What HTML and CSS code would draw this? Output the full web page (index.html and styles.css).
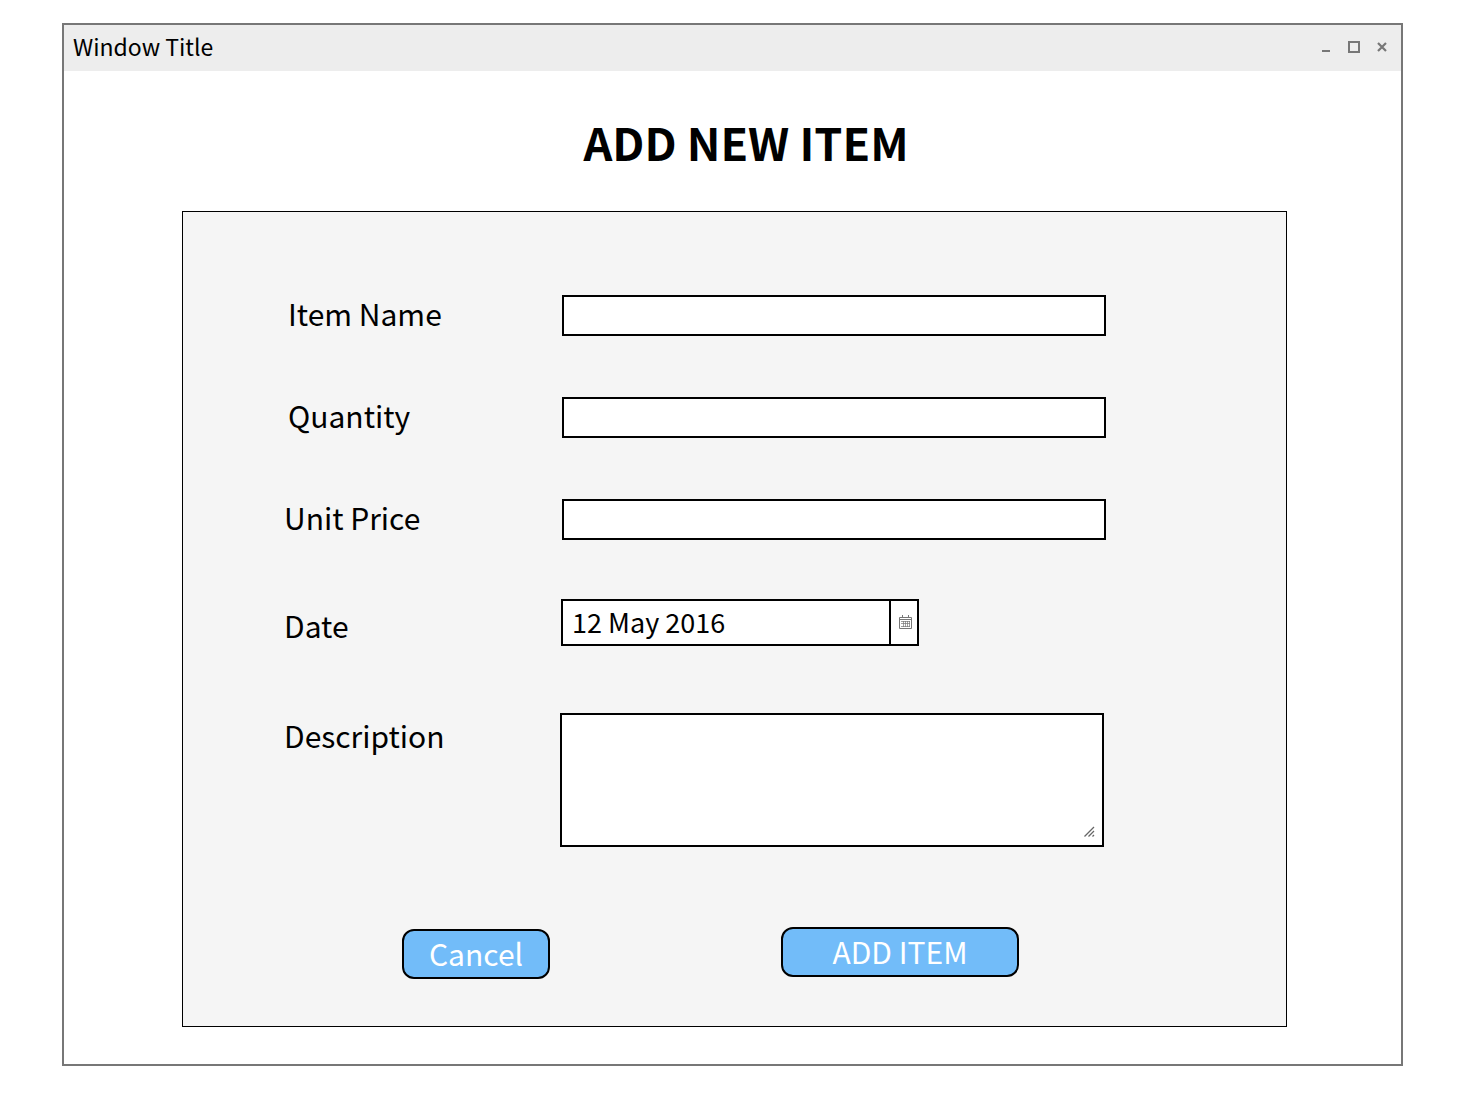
FILE: index.html
```html
<!DOCTYPE html>
<html lang="en">
<head>
<meta charset="utf-8">
<title>Add New Item</title>
<link rel="stylesheet" href="styles.css">
</head>
<body>
<div class="window">
  <header class="titlebar">
    <span class="titlebar-text">Window Title</span>
    <div class="titlebar-controls">
      <button class="control" type="button" aria-label="Minimize"><svg width="12" height="12" viewBox="0 0 12 12"><path d="M2 10h8" stroke="#777" stroke-width="2"/></svg></button>
      <button class="control" type="button" aria-label="Maximize"><svg width="12" height="12" viewBox="0 0 12 12"><rect x="1" y="1" width="10" height="10" fill="none" stroke="#777" stroke-width="2"/></svg></button>
      <button class="control" type="button" aria-label="Close"><svg width="12" height="12" viewBox="0 0 12 12"><path d="M2 2l8 8M10 2l-8 8" stroke="#777" stroke-width="2.2"/></svg></button>
    </div>
  </header>
  <main class="content">
    <h1 class="heading">ADD NEW ITEM</h1>
    <form class="panel">
      <div class="row row-indented">
        <label class="label" for="name">Item Name</label>
        <input class="field" id="name" type="text">
      </div>
      <div class="row row-indented">
        <label class="label" for="quantity">Quantity</label>
        <input class="field" id="quantity" type="text">
      </div>
      <div class="row">
        <label class="label" for="price">Unit Price</label>
        <input class="field" id="price" type="text">
      </div>
      <div class="row row-date">
        <label class="label" for="date">Date</label>
        <div class="date">
          <input class="date-input" id="date" type="text" value="12 May 2016">
          <button class="date-button" type="button" aria-label="Open calendar">
            <svg width="14" height="14" viewBox="0 0 14 14" fill="none" stroke="#777">
              <path d="M.5 2.5h12v11H.5zM.5 4.5h12"/>
              <path d="M3.500 0v3M9.500 0v3"/>
              <path d="M2 6.500h9M2 8.500h9M2 11.500h9M4.500 6v6M6.500 6v6M8.500 6v6M10.500 6v6" stroke-width=".7"/>
            </svg>
          </button>
        </div>
      </div>
      <div class="row row-description">
        <label class="label" for="description">Description</label>
        <div class="area">
          <textarea class="area-input" id="description"></textarea>
          <svg class="area-grip" width="12" height="12" viewBox="0 0 12 12" fill="none" stroke="#666" stroke-width="1.3"><path d="M.5 10.500l9.500-9.500M4.500 10.500l5.500-5.500M8.500 10.500l1.500-1.500"/></svg>
        </div>
      </div>
      <div class="actions">
        <button class="button button-cancel" type="button">Cancel</button>
        <button class="button button-add" type="submit">ADD ITEM</button>
      </div>
    </form>
  </main>
</div>
</body>
</html>
```
FILE: styles.css
```css
* {
  box-sizing: border-box;
}

body {
  margin: 23px 74px 27px 62px;
  background: #fff;
  color: #000;
  font-family: "Noto Sans CJK SC", "Noto Sans", sans-serif;
}

button,
input,
textarea {
  margin: 0;
  font-family: inherit;
  color: inherit;
}

.window {
  border: 2px solid #777;
}

.titlebar {
  display: flex;
  align-items: flex-start;
  justify-content: space-between;
  height: 46px;
  padding: 0 13px 0 9px;
  background: #ededed;
}

.titlebar-text {
  font-size: 23px;
  line-height: 42px;
}

.titlebar-controls {
  display: flex;
  gap: 16px;
  padding-top: 16px;
}

.control {
  display: flex;
  padding: 0;
  border: 0;
  background: none;
}

.content {
  padding: 41px 114px 37px 118px;
}

.heading {
  margin: 0 0 39px;
  padding-left: 23px;
  font-size: 45px;
  font-weight: 700;
  line-height: 60px;
  text-align: center;
}

.panel {
  padding: 83px 180px 47px 101px;
  border: 1px solid #000;
  background: #f5f5f5;
}

.row {
  display: grid;
  grid-template-columns: 278px 1fr;
  align-items: start;
  margin-bottom: 61px;
}

.label {
  font-size: 30px;
  line-height: 36px;
}

.row-indented .label {
  padding-left: 4px;
}

.field {
  width: 100%;
  height: 41px;
  padding: 0 8px;
  border: 2px solid #000;
  background: #fff;
  font-size: 27px;
}

.row-date {
  grid-template-columns: 277px 1fr;
  margin-top: -2px;
  margin-bottom: 67px;
}

.row-date .label {
  margin-top: 8px;
}

.date {
  display: flex;
  width: 358px;
  height: 47px;
  border: 2px solid #000;
  background: #fff;
}

.date-input {
  flex: 1;
  min-width: 0;
  padding: 0 9px 2px;
  border: 0;
  background: none;
  font-size: 27px;
}

.date-button {
  display: flex;
  align-items: center;
  justify-content: center;
  width: 28px;
  padding: 0 0 2px 4px;
  border: 0;
  border-left: 2px solid #000;
  background: none;
}

.row-description {
  grid-template-columns: 276px 1fr;
  padding-right: 2px;
  margin-bottom: 80px;
}

.row-description .label {
  margin-top: 4px;
}

.area {
  position: relative;
  display: flex;
}

.area-input {
  width: 100%;
  height: 134px;
  padding: 8px;
  border: 2px solid #000;
  border-radius: 0;
  background: #fff;
  font-size: 27px;
  resize: none;
}

.area-grip {
  position: absolute;
  right: 8px;
  bottom: 9px;
}

.actions {
  display: flex;
  justify-content: space-between;
  align-items: flex-start;
  padding: 0 87px 0 118px;
}

.button {
  height: 50px;
  padding: 0 0 2px;
  border: 2px solid #000;
  border-radius: 12px;
  background: #72bcf9;
  color: #fff;
  font-size: 30px;
  line-height: 44px;
}

.button-cancel {
  width: 148px;
  margin-top: 2px;
}

.button-add {
  width: 238px;
}
```
